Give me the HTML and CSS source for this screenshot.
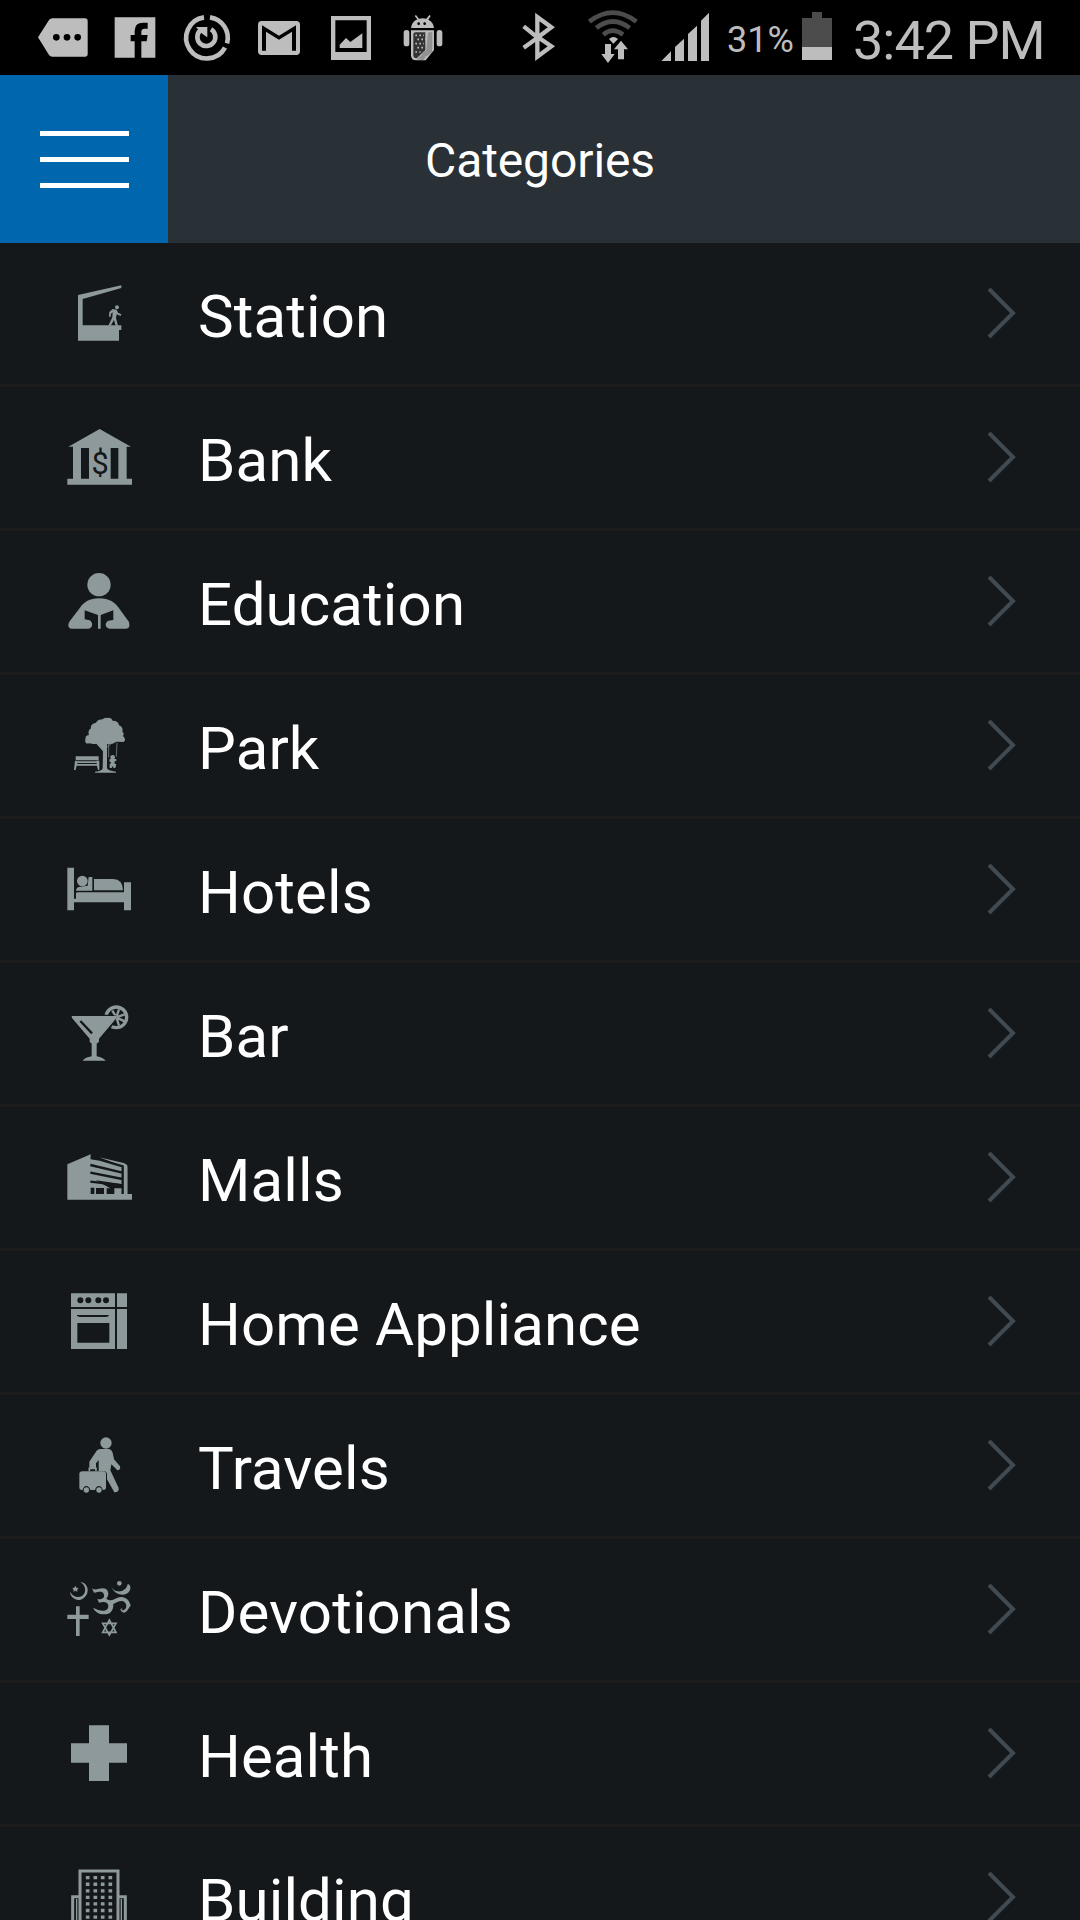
FILE: index.html
```
<!DOCTYPE html>
<html lang="en">
<head>
    <meta charset="UTF-8">
    <meta name="viewport" content="width=device-width, initial-scale=1.0">
    <title>Categories</title>
    <link rel="stylesheet" href="styles.css">
</head>
<body>
    <div class="status-bar">
        <div class="notifications">
            <svg viewBox="82 0 216 225"><path d="M115 112L148 60Q152 55 158 55H256Q264 55 264 63V162Q264 170 256 170H158Q152 170 148 165Z"/><g class="cut"><circle cx="170" cy="112" r="10"/><circle cx="202" cy="112" r="10"/><circle cx="234" cy="112" r="10"/></g></svg>
            <svg viewBox="298 0 216 225"><path d="M345 52H467V173H425V124H441L444 105H425V95Q425 86 435 86H444V68H430Q405 68 405 93V105H393V124H405V173H345Z"/></svg>
            <svg viewBox="513 0 216 225"><g class="ring"><path d="M612 52A62 62 0 1 0 675 143"/><path d="M630 52A62 62 0 0 1 681 130"/><path d="M601 91A27 27 0 1 0 633 88"/></g><path d="M588 81H622V112L613 106L604 99Z"/></svg>
            <svg viewBox="729 0 216 225"><rect x="774" y="63" width="126" height="102" rx="11"/><path class="cut" d="M786 152V76L837 107L888 76V152H876V95L837 119L798 95V152Z"/></svg>
            <svg viewBox="945 0 216 225"><path fill-rule="evenodd" d="M993 48H1113V180H993ZM1006 61V156H1100V61Z"/><path d="M1019 144V134L1038 114L1051 126L1087 100V144Z"/></svg>
            <svg viewBox="1161 0 216 225">
                <path d="M1233 84Q1235 66 1252 58L1244 48L1248 45L1257 56Q1268 53 1279 56L1288 45L1292 48L1285 59Q1301 67 1302 84Z"/>
                <rect x="1211" y="90" width="17" height="49" rx="8"/><rect x="1310" y="90" width="17" height="49" rx="8"/>
                <path d="M1233 91H1302V150L1277 181H1248Q1233 181 1233 166Z"/>
                <path class="shade" d="M1284 97H1297V147L1278 158Z"/>
                <path class="seed" d="M1240 103Q1240 97 1247 97H1276V151L1250 175Q1240 175 1240 165Z"/>
                <g class="dots"><path d="M1246 106H1272M1252 118H1278M1246 131H1272M1252 143H1272M1246 156H1262"/></g>
                <path class="shade" d="M1268 156L1296 147V157L1280 169H1265ZM1250 178L1264 166L1277 170L1270 181Z"/>
                <g class="cut"><circle cx="1256" cy="71" r="4"/><circle cx="1274" cy="71" r="4"/></g>
            </svg>
        </div>
        <div class="system">
            <svg class="bluetooth" viewBox="0 0 225 225"><path d="M71 79L113 113L71 143M112 113L154 82L112 51V170L154 139L112 110"/></svg>
            <svg class="wifi" viewBox="225 0 225 225"><g class="waves"><path d="M268 65Q338 11 409 65"/><path d="M289 84Q338 45 389 84"/><path d="M310 104Q338 80 369 104"/></g><path d="M327 117Q340 105 354 117L340 131Z"/><g class="cut-line"><path d="M315 132H333V162H344L324 189L304 162H315ZM354 178V148H342L363 122L384 148H372V178Z"/></g></svg>
            <svg class="signal" viewBox="450 0 210 225"><path d="M484 183L513 154V183ZM525 183V141L552 116V183ZM564 183V102L591 77V183ZM603 183V62L627 38V183Z"/></svg>
            <span class="percent">31%</span>
            <svg class="battery" viewBox="0 0 90 225"><path class="empty" d="M0 54H30V36H60V54H90V141H0Z"/><path d="M0 141H90V180H0Z"/></svg>
            <span class="time">3:42 PM</span>
        </div>
    </div>

    <header class="header">
        <button class="menu-button" aria-label="Menu">
            <span></span>
            <span></span>
            <span></span>
        </button>
        <h1>Categories</h1>
    </header>

    <ul class="categories">
        <li>
            <svg class="icon" viewBox="30 9 240 240"><path d="M84 75L214 46V54L98 87V166H214V180H207V212H84Z"/><circle cx="201" cy="112" r="6"/><path d="M188 117L200 119L204 128L214 133L212 138L200 133L198 144L204 167H197L192 150L182 167H175L187 142L188 127L183 131L182 140H177L178 126Z"/></svg>
            <span class="name">Station</span>
            <svg class="arrow" viewBox="0 0 30 54"><path d="M3 3L27 27L3 51"/></svg>
        </li>
        <li>
            <svg class="icon" viewBox="30 441 240 240"><path d="M149 477L243 530H230V626H246V644H52V626H69V530H55Z"/><path class="cut-bg" d="M93 534H117V626H93ZM182 534H205V626H182Z"/><text x="150" y="611" class="dollar">$</text></svg>
            <span class="name">Bank</span>
            <svg class="arrow" viewBox="0 0 30 54"><path d="M3 3L27 27L3 51"/></svg>
        </li>
        <li>
            <svg class="icon" viewBox="30 3 240 240"><circle cx="147" cy="74" r="35"/><path d="M147 115C180 115 194 128 206 143L237 186Q242 206 228 206H181C166 206 162 189 175 182L190 180V151L152 165V206H144V165L104 151V178L119 181C130 187 129 206 115 206H65C53 206 53 193 59 184L90 143C102 126 119 115 147 115Z"/></svg>
            <span class="name">Education</span>
            <svg class="arrow" viewBox="0 0 30 54"><path d="M3 3L27 27L3 51"/></svg>
        </li>
        <li>
            <svg class="icon" viewBox="30 435 240 240"><path d="M158 478Q163 472 172 474Q184 471 188 482Q206 482 207 496Q221 502 217 515Q224 520 219 528Q231 540 220 546L199 545L188 551L171 553V624Q172 632 198 635V638H135V635Q157 634 158 624L159 574L139 551Q130 554 119 550Q101 554 107 533Q106 527 117 525Q112 512 123 505Q120 493 138 488Q144 478 158 478Z"/><path d="M77 589H146V601H77ZM76 604H148V609H76ZM76 612H148V617H76ZM75 602L83 604L77 630H72ZM140 602H148V630H144L140 615Z"/><path class="thin" d="M176 550V592M201 548L199 590M159 558L152 551M171 562L184 551"/><circle cx="188" cy="592" r="7"/><path d="M179 597H199V603H194V612H199L196 624H191L188 618L185 624H179V612L184 609L178 604Z"/></svg>
            <span class="name">Park</span>
            <svg class="arrow" viewBox="0 0 30 54"><path d="M3 3L27 27L3 51"/></svg>
        </li>
        <li>
            <svg class="icon" viewBox="30 -3 240 240"><path d="M52 53H72V146H78V129Q79 127 84 127H222V97H243V181H222V157H72V181H52Z"/><circle cx="97" cy="93" r="16"/><path d="M87 111L113 107L116 81H127V122H78Q80 111 87 111ZM132 87H189Q219 88 219 121H132Z"/></svg>
            <span class="name">Hotels</span>
            <svg class="arrow" viewBox="0 0 30 54"><path d="M3 3L27 27L3 51"/></svg>
        </li>
        <li>
            <svg class="icon" viewBox="30 429 240 240"><circle class="lemon" cx="199" cy="502" r="31"/><path class="segments" d="M199 502L187 482M199 502L207 478M199 502L224 493M199 502L224 514M199 502L207 527"/><path class="cut-bg" d="M160 494H184L202 498L184 532L172 544L160 540Z"/><path d="M65 498H202L197 507L147 566V575L140 581V619Q160 623 167 632H98Q106 622 125 619V581L119 575V566L66 504Z"/><path class="glare" d="M91 513L126 550"/></svg>
            <span class="name">Bar</span>
            <svg class="arrow" viewBox="0 0 30 54"><path d="M3 3L27 27L3 51"/></svg>
        </li>
        <li>
            <svg class="icon" viewBox="30 -9 240 240"><path d="M52 73L122 43V55L232 75V162H246V179H52Z"/><path d="M148 52L221 69Q232 72 232 84V162H222V88Q222 80 213 77Z"/><path class="floors" d="M121 75L217 98M121 98L217 117M121 125L217 136M122 54L150 59L218 79V162"/><path class="cut-bg" d="M137 121L219 133V145H193V162H170V145H181ZM122 143H133V162H122ZM138 144H162V162H138Z"/></svg>
            <span class="name">Malls</span>
            <svg class="arrow" viewBox="0 0 30 54"><path d="M3 3L27 27L3 51"/></svg>
        </li>
        <li>
            <svg class="icon" viewBox="30 423 240 240"><path d="M63 460H195V501H63ZM201 460H231V501H201ZM63 507H195V627H63ZM201 507H231V627H201Z"/><g class="cut-bg"><circle cx="91" cy="481" r="9"/><circle cx="115" cy="481" r="9"/><circle cx="145" cy="481" r="9"/><circle cx="168" cy="481" r="9"/><path d="M81 525H176V529L168 531H89L81 528ZM82 549H178V608H82Z"/></g></svg>
            <span class="name">Home Appliance</span>
            <svg class="arrow" viewBox="0 0 30 54"><path d="M3 3L27 27L3 51"/></svg>
        </li>
        <li>
            <svg class="icon" viewBox="30 15 240 240"><circle cx="168" cy="69" r="17"/><path d="M151 87H177Q184 88 188 98L192 118L210 139Q213 150 202 151L184 133L181 151L206 204Q207 218 193 217L171 178V163Q170 154 162 154H146V120L138 130V145H118V125L136 98Q142 87 151 87Z"/><path d="M97 154H160Q168 154 168 162V202Q168 210 160 210H158Q156 199 147 198Q138 198 135 210H121Q118 199 109 198Q100 199 98 210H96Q88 210 88 202V162Q88 154 97 154Z"/><circle cx="109" cy="210" r="8"/><circle cx="147" cy="210" r="8"/><path class="handle" d="M118 153V145H138V153"/></svg>
            <span class="name">Travels</span>
            <svg class="arrow" viewBox="0 0 30 54"><path d="M3 3L27 27L3 51"/></svg>
        </li>
        <li>
            <svg class="icon" viewBox="30 447 240 240">
                <path d="M90 486C119 488 122 529 92 539C76 543 61 531 60 515C71 536 97 535 104 518C109 505 102 492 90 486Z"/>
                <path d="M76 497L79 503L86 504L81 509L83 515L76 512L70 515L71 509L67 504L73 503Z"/>
                <path d="M78 559H89V584H116V597H89V648H78V597H52V584H78Z"/>
                <circle cx="208" cy="490" r="7"/>
                <path d="M183 498C191 520 226 521 233 493C240 490 244 504 239 512C229 531 193 528 183 498Z"/>
                <path d="M126 505C136 513 145 505 158 505C176 505 180 524 169 536C184 547 190 537 201 534C221 525 239 538 242 558C238 560 235 568 230 574C221 583 213 575 211 568L217 564L215 571C229 572 232 557 226 549C216 537 202 547 190 552C191 574 179 584 161 583C143 582 132 572 130 563C151 575 175 577 175 557C174 544 158 545 147 548L142 537C157 540 166 532 161 521C156 511 145 516 132 518Z"/>
                <path class="star" d="M178 600L198 637H158ZM178 645L158 610H198Z"/>
            </svg>
            <span class="name">Devotionals</span>
            <svg class="arrow" viewBox="0 0 30 54"><path d="M3 3L27 27L3 51"/></svg>
        </li>
        <li>
            <svg class="icon" viewBox="30 9 240 240"><path d="M117 46H177V100H231V158H177V213H117V158H63V100H117Z"/></svg>
            <span class="name">Health</span>
            <svg class="arrow" viewBox="0 0 30 54"><path d="M3 3L27 27L3 51"/></svg>
        </li>
        <li>
            <svg class="icon" viewBox="30 441 240 240"><path class="walls" d="M90 660V483H204V660M68 660V560H88M226 660V560H206"/><path class="frame" d="M80 660V567M214 660V567"/><path class="windows" d="M113 498V660M136 498V660M158 498V660M181 498V660"/></svg>
            <span class="name">Building</span>
            <svg class="arrow" viewBox="0 0 30 54"><path d="M3 3L27 27L3 51"/></svg>
        </li>
    </ul>
</body>
</html>
```
FILE: styles.css
```
* {
    box-sizing: border-box;
}

body {
    margin: 0;
    height: 1920px;
    overflow: hidden;
    background: #14181b;
    color: #fff;
    font-family: Roboto, "Noto Sans", sans-serif;
}

svg {
    display: block;
    flex: none;
}

/* Status bar */
.status-bar {
    display: flex;
    justify-content: space-between;
    height: 75px;
    padding: 0 36px 0 27px;
    background: #000;
    color: #bdbdbd;
    fill: #bdbdbd;
}

.notifications, .system {
    display: flex;
    align-items: center;
}

.notifications svg {
    width: 72px;
    height: 75px;
}

.cut {
    fill: #000;
}

.ring {
    fill: none;
    stroke: #bdbdbd;
    stroke-width: 14;
}

.shade {
    fill: #929292;
}

.seed {
    fill: #333;
}

.dots {
    stroke: #bdbdbd;
    stroke-width: 5;
    stroke-dasharray: 5 7;
}

.bluetooth {
    width: 75px;
    height: 75px;
    fill: none;
    stroke: #bdbdbd;
    stroke-width: 13;
}

.wifi {
    width: 75px;
    height: 75px;
}

.waves {
    fill: none;
    stroke: #4c4c4c;
    stroke-width: 14;
}

.cut-line {
    stroke: #000;
    stroke-width: 5;
    paint-order: stroke;
}

.signal {
    width: 70px;
    height: 75px;
}

.percent {
    width: 82px;
    padding: 4px 0 0 7px;
    font-size: 36px;
}

.battery {
    width: 30px;
    height: 75px;
}

.empty {
    fill: #4c4c4c;
}

.time {
    width: 212px;
    padding: 6px 0 0 21px;
    font-size: 54px;
    letter-spacing: -1px;
    white-space: nowrap;
}

/* Header */
.header {
    display: grid;
    grid-template-columns: 168px 1fr 168px;
    height: 168px;
    background: #2a3136;
}

.header h1 {
    margin: 0;
    padding-top: 4px;
    font-size: 48px;
    font-weight: 400;
    line-height: 164px;
    letter-spacing: -0.1px;
    text-align: center;
}

.menu-button {
    display: flex;
    flex-direction: column;
    justify-content: center;
    gap: 21px;
    padding: 0 39px 0 40px;
    border: none;
    background: #0066ae;
}

.menu-button span {
    height: 5px;
    background: #fff;
}

/* Category list */
.categories {
    margin: 0;
    padding: 0;
    list-style: none;
}

.categories li {
    display: flex;
    align-items: center;
    height: 144px;
    padding: 0 64px 2px 60px;
    border-bottom: 3px solid #1e1c1c;
}

.icon {
    width: 80px;
    height: 80px;
    fill: #8e999b;
}

.name {
    flex: 1;
    padding: 9px 0 0 58px;
    font-size: 60px;
    line-height: 72px;
    letter-spacing: 0.12px;
}

.arrow {
    width: 30px;
    height: 54px;
    fill: none;
    stroke: #414951;
    stroke-width: 4;
}

.cut-bg {
    fill: #14181b;
}

.dollar {
    fill: #14181b;
    font-size: 92px;
    text-anchor: middle;
}

.thin {
    fill: none;
    stroke: #8e999b;
    stroke-width: 2;
}

.lemon {
    fill: #14181b;
    stroke: #8e999b;
    stroke-width: 10;
}

.segments {
    stroke: #8e999b;
    stroke-width: 7;
}

.glare, .floors {
    fill: none;
    stroke: #14181b;
    stroke-width: 7;
}

.handle, .star {
    fill: none;
    stroke: #8e999b;
    stroke-width: 5;
}

.walls {
    fill: none;
    stroke: #8e999b;
    stroke-width: 9;
}

.frame {
    stroke: #8e999b;
    stroke-width: 4;
}

.windows {
    stroke: #8e999b;
    stroke-width: 11;
    stroke-dasharray: 10 9.7;
}
```
